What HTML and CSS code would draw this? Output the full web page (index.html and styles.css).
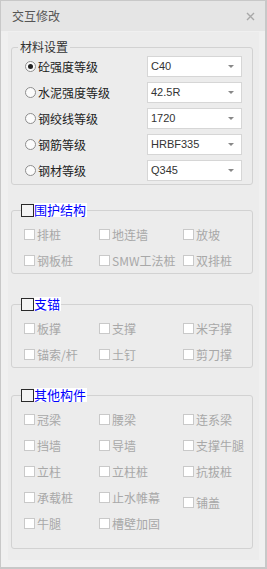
FILE: index.html
```html
<!DOCTYPE html>
<html>
<head>
    <meta charset="utf-8">
    <title>交互修改</title>
    <link rel="stylesheet" href="styles.css">
</head>
<body>
<div class="dialog">
    <div class="titlebar">
        <span class="title">交互修改</span>
        <svg class="close" width="9" height="9" viewBox="0 0 9 9"><path d="M1 1L8 8M8 1L1 8" stroke="#a8a8a8" stroke-width="1.4"/></svg>
    </div>
    <div class="body">
        <div class="panel">
            <fieldset class="group group-material">
                <legend class="legend-plain">材料设置</legend>
                <div class="param-row"><span class="radio checked"></span><span class="param-label">砼强度等级</span><div class="combo"><span>C40</span><span class="combo-arrow"></span></div></div>
                <div class="param-row"><span class="radio"></span><span class="param-label">水泥强度等级</span><div class="combo"><span>42.5R</span><span class="combo-arrow"></span></div></div>
                <div class="param-row"><span class="radio"></span><span class="param-label">钢绞线等级</span><div class="combo"><span>1720</span><span class="combo-arrow"></span></div></div>
                <div class="param-row"><span class="radio"></span><span class="param-label">钢筋等级</span><div class="combo"><span>HRBF335</span><span class="combo-arrow"></span></div></div>
                <div class="param-row"><span class="radio"></span><span class="param-label">钢材等级</span><div class="combo"><span>Q345</span><span class="combo-arrow"></span></div></div>
            </fieldset>

            <fieldset class="group group-retain">
                <legend class="legend-check"><span class="legend-box"></span><span class="legend-text">围护结构</span></legend>
                <div class="item-grid">
                    <span class="item"><span class="box"></span>排桩</span>
                    <span class="item"><span class="box"></span>地连墙</span>
                    <span class="item"><span class="box"></span>放坡</span>
                    <span class="item"><span class="box"></span>钢板桩</span>
                    <span class="item"><span class="box"></span>SMW工法桩</span>
                    <span class="item"><span class="box"></span>双排桩</span>
                </div>
            </fieldset>

            <fieldset class="group group-support">
                <legend class="legend-check"><span class="legend-box"></span><span class="legend-text">支锚</span></legend>
                <div class="item-grid">
                    <span class="item"><span class="box"></span>板撑</span>
                    <span class="item"><span class="box"></span>支撑</span>
                    <span class="item"><span class="box"></span>米字撑</span>
                    <span class="item"><span class="box"></span>锚索/杆</span>
                    <span class="item"><span class="box"></span>土钉</span>
                    <span class="item"><span class="box"></span>剪刀撑</span>
                </div>
            </fieldset>

            <fieldset class="group group-other">
                <legend class="legend-check"><span class="legend-box"></span><span class="legend-text">其他构件</span></legend>
                <div class="item-grid">
                    <span class="item"><span class="box"></span>冠梁</span>
                    <span class="item"><span class="box"></span>腰梁</span>
                    <span class="item"><span class="box"></span>连系梁</span>
                    <span class="item"><span class="box"></span>挡墙</span>
                    <span class="item"><span class="box"></span>导墙</span>
                    <span class="item"><span class="box"></span>支撑牛腿</span>
                    <span class="item"><span class="box"></span>立柱</span>
                    <span class="item"><span class="box"></span>立柱桩</span>
                    <span class="item"><span class="box"></span>抗拔桩</span>
                    <span class="item"><span class="box"></span>承载桩</span>
                    <span class="item"><span class="box"></span>止水帷幕</span>
                    <span class="item item-low"><span class="box"></span>铺盖</span>
                    <span class="item"><span class="box"></span>牛腿</span>
                    <span class="item"><span class="box"></span>槽壁加固</span>
                </div>
            </fieldset>
        </div>
    </div>
</div>
</body>
</html>
```

FILE: styles.css
```css
* { box-sizing: border-box; }

body {
    margin: 0;
    font-family: "Noto Sans CJK SC", sans-serif;
    font-size: 12px;
    color: #333;
}

.dialog {
    width: 267px;
    height: 569px;
    border: 1px solid #c8c8c8;
    border-right-width: 2px;
    border-bottom-width: 2px;
    background: #f0f0f0;
}

.titlebar {
    height: 30px;
    background: #e5e5e5;
    display: flex;
    align-items: center;
    justify-content: space-between;
    padding: 0 10px 0 11px;
}
.title { color: #555; line-height: 14px; }
.close { display: block; }

.body { padding: 1px 6px 6px 7px; }

.panel {
    background: #ececec;
    padding: 9px 6px 11px 3px;
}

/* group boxes */
.group {
    margin: 0;
    padding: 0;
    border: 1px solid #d2d2d2;
    border-radius: 3px;
    min-width: 0;
}
.group-material { padding-bottom: 1px; }
.group-retain { margin-top: 18px; }
.group-support { margin-top: 23px; }
.group-other { margin-top: 20px; padding-bottom: 12px; }

.legend-plain {
    margin-left: 6px;
    padding: 0 2px;
    line-height: 12px;
    font-size: 12px;
    color: #333;
}

.legend-check {
    margin-left: 9px;
    padding: 0;
    display: flex;
    align-items: center;
    height: 14px;
}
.legend-box {
    width: 13px;
    height: 13px;
    border: 1px solid #2a2a2a;
    background: #f4f4f4;
}
.legend-text {
    background: #fff;
    color: #0000ff;
    font-size: 13px;
    line-height: 14px;
    padding-right: 1px;
}
.group-retain .item-grid,
.group-support .item-grid,
.group-other .item-grid { padding-top: 4px; }

/* material rows */
.param-row {
    height: 26px;
    display: flex;
    align-items: center;
    padding-left: 13px;
    padding-right: 10px;
}
.radio {
    width: 11px;
    height: 11px;
    border: 1px solid #8e8e8e;
    border-radius: 50%;
    background: #fbfbfb;
    display: flex;
    align-items: center;
    justify-content: center;
}
.radio.checked::after {
    content: "";
    width: 5px;
    height: 5px;
    border-radius: 50%;
    background: #222;
}
.param-label { margin-left: 2px; color: #222; }

.combo {
    margin-left: auto;
    width: 95px;
    height: 21px;
    background: #fff;
    border: 1px solid #d6d6d6;
    display: flex;
    align-items: center;
    justify-content: space-between;
    padding: 0 7px 0 3px;
    font-family: "Liberation Sans", sans-serif;
    font-size: 11px;
    color: #333;
}
.combo-arrow {
    width: 0;
    height: 0;
    border-left: 3px solid transparent;
    border-right: 3px solid transparent;
    border-top: 3px solid #888;
}

/* checkbox items */
.item-grid {
    display: grid;
    grid-template-columns: 75px 84px 1fr;
    grid-auto-rows: 26px;
    padding-left: 12px;
}
.item {
    display: flex;
    align-items: center;
    color: #a8a8a8;
    white-space: nowrap;
}
.item-low { padding-top: 10px; }
.box {
    width: 11px;
    height: 11px;
    border: 1px solid #c9c9c9;
    background: #fff;
    margin-right: 2px;
}
```
